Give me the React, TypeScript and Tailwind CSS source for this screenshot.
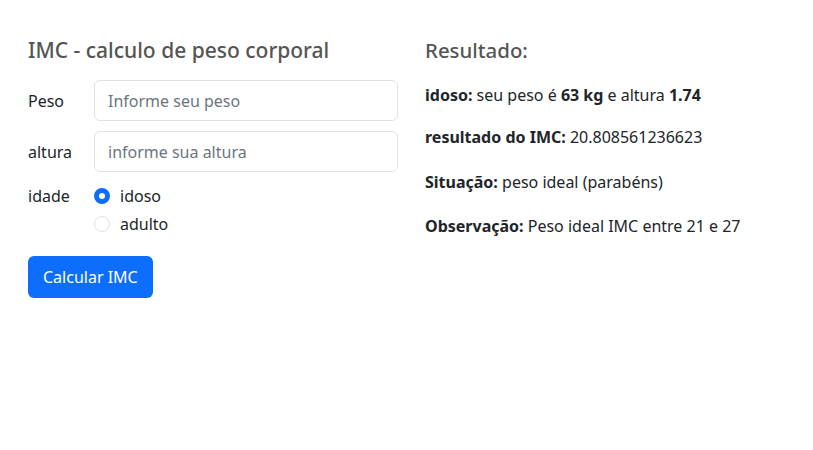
import React from 'react';

const font = { fontFamily: '"Segoe UI", "Noto Sans", sans-serif' };

function Field({ label, placeholder }: { label: string; placeholder: string }) {
  return (
    <div className="flex items-center">
      <label className="w-[66px] text-[16px] text-[#212529]">{label}</label>
      <input
        type="text"
        placeholder={placeholder}
        className="h-[41px] flex-1 rounded-[6px] border border-[#dee2e6] px-[13px] text-[16px] text-[#212529] placeholder:text-[#6c757d] outline-none"
      />
    </div>
  );
}

function Radio({ label, checked }: { label: string; checked?: boolean }) {
  return (
    <label className="flex h-[28px] items-center gap-[10px] text-[16px] text-[#212529]">
      {checked ? (
        <span className="h-[16px] w-[16px] rounded-full border-[5px] border-[#0d6efd] bg-white" />
      ) : (
        <span className="h-[16px] w-[16px] rounded-full border border-[#dee2e6] bg-white" />
      )}
      {label}
    </label>
  );
}

export default function App() {
  return (
    <div className="min-h-[450px] w-[813px] bg-white" style={font}>
      <div className="flex gap-[27px] px-[28px] pt-[36px]">
        <div className="w-[370px]">
          <h5 className="text-[21px] font-medium leading-[28px] text-[#555]">IMC - calculo de peso corporal</h5>
          <div className="mt-[16px] flex flex-col gap-[10px]">
            <Field label="Peso" placeholder="Informe seu peso" />
            <Field label="altura" placeholder="informe sua altura" />
            <div className="flex">
              <span className="w-[66px] pt-[1px] text-[16px] leading-[26px] text-[#212529]">idade</span>
              <div className="flex flex-col">
                <Radio label="idoso" checked />
                <Radio label="adulto" />
              </div>
            </div>
          </div>
          <button className="mt-[18px] h-[42px] rounded-[6px] bg-[#0d6efd] px-[15px] text-[16px] text-white">
            Calcular IMC
          </button>
        </div>
        <div className="flex-1">
          <h5 className="text-[20.4px] font-medium leading-[28px] text-[#555]">Resultado:</h5>
          <div className="mt-[19px] text-[16px] leading-[24px] text-[#212529]">
            <p>
              <b>idoso:</b> seu peso é <b>63 kg</b> e altura <b>1.74</b>
            </p>
            <p className="mt-[18px]">
              <b>resultado do IMC:</b> 20.808561236623
            </p>
            <p className="mt-[21px]">
              <b>Situação:</b> peso ideal (parabéns)
            </p>
            <p className="mt-[20px]">
              <b>Observação:</b> Peso ideal IMC entre 21 e 27
            </p>
          </div>
        </div>
      </div>
    </div>
  );
}
